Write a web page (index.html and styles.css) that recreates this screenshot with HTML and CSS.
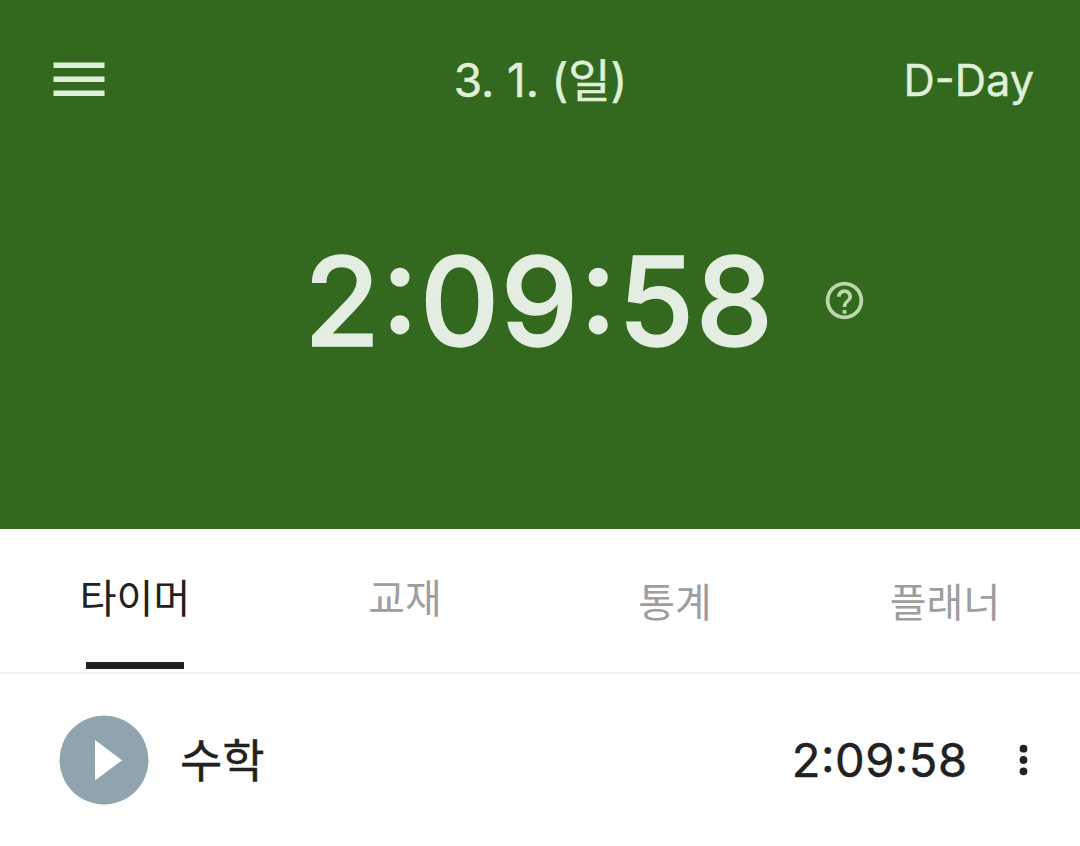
FILE: index.html
```html
<!DOCTYPE html>
<html lang="ko">
<head>
<meta charset="utf-8">
<title>타이머</title>
<link rel="stylesheet" href="styles.css">
</head>
<body>
<header class="hero">
  <div class="topbar">
    <svg class="menu" viewBox="0 0 52 36" aria-label="menu"><path d="M.500 .500h51v5.500h-51zM.500 14.500h51v5.500h-51zM.500 28.500h51v5.500h-51z"/></svg>
    <h1 class="date">3. 1. (<span class="ko">일</span>)</h1>
    <span class="dday">D-Day</span>
  </div>
  <div class="clock">
    <span class="total">2:09:58</span>
    <svg class="help" viewBox="0 0 24 24"><path d="M11 17h2v2h-2zM12 2C6.480 2 2 6.480 2 12s4.480 10 10 10 10-4.480 10-10S17.520 2 12 2zm0 18c-4.410 0-8-3.590-8-8s3.590-8 8-8 8 3.590 8 8-3.590 8-8 8zm0-14c-2.210 0-4 1.790-4 4h2c0-1.100.9-2 2-2s2 .9 2 2c0 2-3 2.250-3 5.500h2c0-2.750 3-3 3-5.500 0-2.210-1.790-4-4-4z"/></svg>
  </div>
</header>
<nav class="tabs">
  <a class="tab active">타이머</a>
  <a class="tab">교재</a>
  <a class="tab low">통계</a>
  <a class="tab low">플래너</a>
</nav>
<main class="row">
  <svg class="play" viewBox="0 0 90 90"><circle cx="45" cy="45" r="44.500"/><path d="M36 25v40.500l27-20.250z"/></svg>
  <span class="subject">수학</span>
  <span class="elapsed">2:09:58</span>
  <svg class="more" viewBox="0 0 10 32"><circle cx="4.500" cy="4.700" r="3.900"/><circle cx="4.500" cy="16" r="3.900"/><circle cx="4.500" cy="27.300" r="3.900"/></svg>
</main>
</body>
</html>
```
FILE: styles.css
```css
* { box-sizing: border-box; }
body { margin: 0; background: #fff; font-family: Inter, "Noto Sans CJK KR", sans-serif; color: #212121; }
.hero { height: 528.600px; background: #33691e; color: #dff0d8; }
.topbar { height: 160px; display: grid; grid-template-columns: 1fr auto 1fr; align-items: center; padding: 0 46px 0 53px; }
.menu { width: 52px; height: 36px; fill: #dff0d8; }
.date { margin: 0 6px 0 0; font-size: 46px; font-weight: 400; line-height: 60px; letter-spacing: -0.100px; white-space: nowrap; -webkit-text-stroke: 0.500px; }
.dday { justify-self: end; font-size: 43.300px; font-weight: 400; line-height: 60px; -webkit-text-stroke: 0.400px; }
.clock { height: 281px; display: flex; align-items: center; padding-left: 304px; }
.total { font-size: 123.500px; font-weight: 500; line-height: 150px; width: 518px; letter-spacing: 1.100px; font-feature-settings: "calt" 1; color: #e4ede1; white-space: nowrap; -webkit-text-stroke: 1.300px; }
.help { width: 45px; height: 45px; fill: #b9d9ab; }
.tabs { height: 145.400px; display: grid; grid-template-columns: repeat(4, 1fr); border-bottom: 2px solid #f0f0f3; }
.tab { display: flex; flex-direction: column; align-items: center; padding-top: 40px; font-size: 40px; line-height: 60px; color: #9e9e9e; }
.low { padding-top: 44px; }
.active { color: #212121; }
.active::after { content: ""; width: 98px; height: 7px; margin-top: 33px; background: #212121; }
.row { height: 172px; display: flex; align-items: center; padding: 0 51px 0 59px; }
.play { width: 90px; height: 90px; fill: #90a4ae; }
.play path { fill: #fff; }
.subject { margin-left: 31px; font-size: 46px; font-weight: 400; line-height: 60px; -webkit-text-stroke: 0.400px; }
.elapsed { margin-left: auto; font-size: 47px; font-weight: 400; line-height: 60px; letter-spacing: 0.500px; font-feature-settings: "calt" 1; -webkit-text-stroke: 0.500px; }
.more { width: 10px; height: 32px; margin-left: 51.500px; fill: #212121; }
```
